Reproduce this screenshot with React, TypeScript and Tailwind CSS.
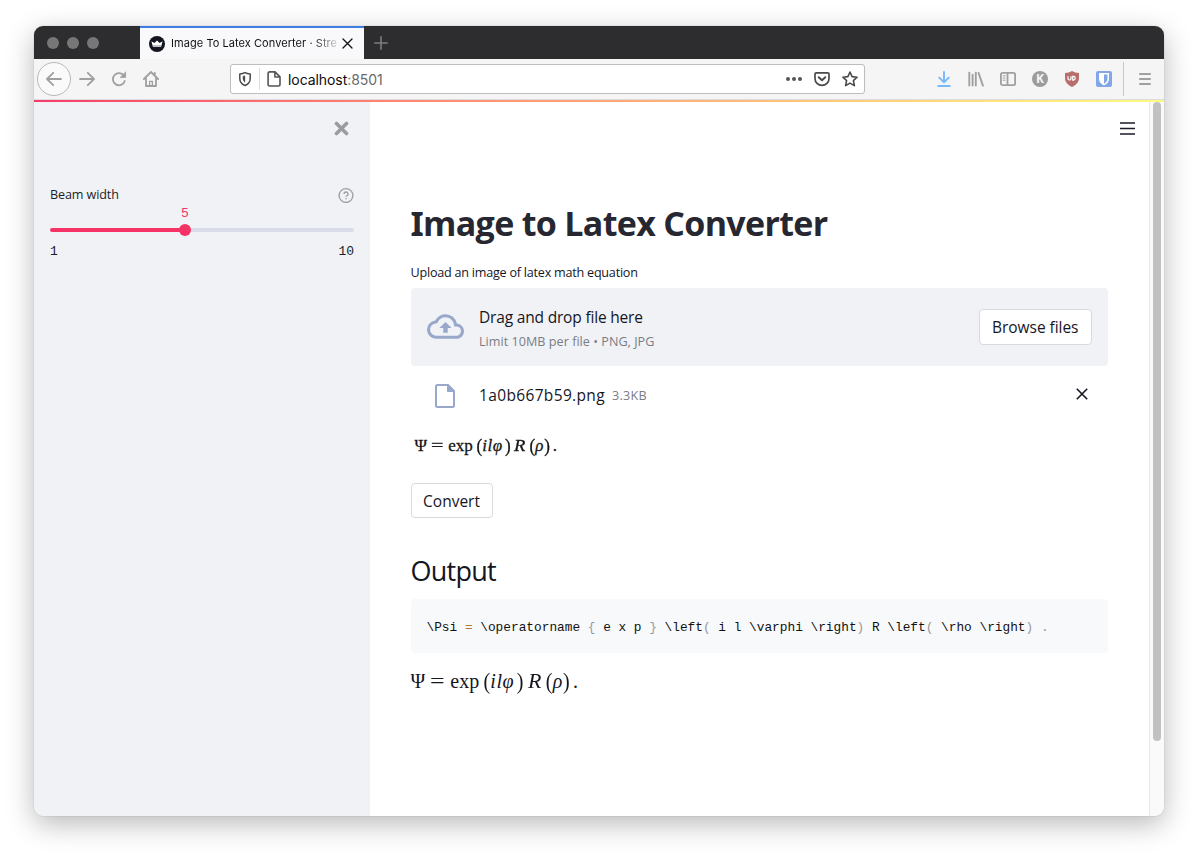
import type { ReactNode } from "react";

function TabStrip() {
  return (
    <div className="flex h-[33px] shrink-0 bg-[#2d2d2f]">
      <div className="flex w-[106px] items-center gap-2 pl-[13px]">
        <span className="size-3 rounded-full bg-[#777]" />
        <span className="size-3 rounded-full bg-[#777]" />
        <span className="size-3 rounded-full bg-[#777]" />
      </div>
      <div className="flex w-[224px] items-center border-t-2 border-[#3b7de0] bg-[#f9f9fb] pl-[9px]">
        <svg className="size-4 shrink-0" viewBox="0 0 16 16">
          <circle cx="8" cy="8" r="8" fill="#12141f" />
          <path d="M2.4 5.2 5.3 7 8 4.400l2.700 2.600 2.900-1.800-1.500 5.600H3.900z" fill="#fff" />
          <path d="M3.800 9.600h8.400" stroke="#9a9ba2" strokeWidth="0.700" />
        </svg>
        <div className="ml-[6px] w-[166px] whitespace-nowrap bg-linear-to-r from-[#111] from-85% to-[#11111130] bg-clip-text font-['Inter',sans-serif] text-[11px] tracking-[0.06px] text-transparent">
          Image To Latex Converter · Stre
        </div>
        <svg className="ml-[5px] size-[11px] shrink-0" viewBox="0 0 11 11" fill="none" stroke="#111" strokeWidth="1.300" strokeLinecap="round">
          <path d="M1 1l9 9M10 1l-9 9" />
        </svg>
      </div>
      <div className="flex items-center pl-[10px]">
        <svg className="size-[14px]" viewBox="0 0 14 14" fill="none" stroke="#7c7c7e" strokeWidth="1.600" strokeLinecap="round">
          <path d="M7 .8v12.400M.8 7h12.400" />
        </svg>
      </div>
    </div>
  );
}

function Icon({ children, className = "", color = "#a0a0a0", width = 2 }: { children: ReactNode; className?: string; color?: string; width?: number }) {
  return (
    <svg className={`size-4 shrink-0 ${className}`} viewBox="0 0 16 16" fill="none" stroke={color} strokeWidth={width} strokeLinecap="round" strokeLinejoin="round">
      {children}
    </svg>
  );
}

function Toolbar() {
  return (
    <div className="flex h-[41px] shrink-0 items-center border-b border-[#dcdce0] bg-[#f5f5f5]">
      <div className="ml-[3px] flex size-[34px] items-center justify-center rounded-full border border-[#b8b8b8] bg-[#fafafa]">
        <Icon width={1.8}><path d="M15 8H1.2M7.2 1.8 1 8l6.2 6.2" /></Icon>
      </div>
      <Icon className="ml-2" width={1.8}><path d="M1 8h13.8M8.8 1.8 15 8l-6.2 6.2" /></Icon>
      <Icon className="ml-4" width={1.8}>
        <path d="M13.2 5A6.1 6.1 0 1 0 13.8 10" />
        <path d="M14.6 1.3v5.1H9.5z" fill="#a0a0a0" strokeWidth="0.8" />
      </Icon>
      <Icon className="ml-4" width={1.8}>
        <path d="M.9 8 8 1l7.1 7M3 7.5V15h10V7.5M11.8 2v2" />
        <path d="M6.6 15v-4.6h2.8V15" strokeWidth="1.3" />
      </Icon>
      <div className="ml-[71px] flex h-[30px] w-[635px] shrink-0 items-center rounded-[3px] border border-[#bdbdbd] bg-white">
        <Icon className="ml-[6px]" color="#4a4a4a" width={1.5}>
          <path d="M2.8 3Q6 2.700 8 1.600 10 2.700 13.200 3v4.400c0 3.300-2.200 5.800-5.200 7.100-3-1.300-5.200-3.800-5.200-7.100z" />
          <path d="M8 4.800v6.600C6.600 10.300 5.900 9 5.900 7.300V5.500z" fill="#4a4a4a" strokeWidth="0.300" />
        </Icon>
        <span className="ml-[6px] h-[22px] w-px bg-[#dcdcdc]" />
        <Icon className="ml-[6px]" color="#555" width={1.6}>
          <path d="M3.8.9H9l5 5v7.4a1.7 1.7 0 0 1-1.7 1.7H3.8a1.7 1.7 0 0 1-1.7-1.7V2.6A1.7 1.7 0 0 1 3.8.9zM8.9 1v5H14" />
        </Icon>
        <span className="ml-[6px] w-[480px] font-['Inter',sans-serif] text-[14px] tracking-[-0.07px] text-[#0c0c0d]">
          localhost<span className="text-[#6a6a6c]">:8501</span>
        </span>
        <Icon className="ml-[18px]" color="#555" width={0}>
          <g fill="#555"><circle cx="2" cy="8" r="2" /><circle cx="8" cy="8" r="2" /><circle cx="14" cy="8" r="2" /></g>
        </Icon>
        <Icon className="ml-3" color="#4a4a4a" width={1.7}>
          <path d="M2.3 1.8h11.4A1.3 1.3 0 0 1 15 3.1v4.3a7 7 0 0 1-14 0V3.1a1.3 1.3 0 0 1 1.3-1.3z" />
          <path d="m4.7 6.2 3.3 3.1 3.3-3.1" strokeWidth="1.9" />
        </Icon>
        <Icon className="ml-3" color="#4a4a4a" width={1.6}>
          <path d="m8 1 2.1 4.6 5 .6-3.7 3.4 1 5L8 12.1l-4.4 2.5 1-5L.9 6.2l5-.6z" />
        </Icon>
      </div>
      <Icon className="ml-[71px]" color="#78baf9" width={1.9}><path d="M8 1v10M3.2 6.6 8 11.3l4.8-4.7M2.2 15h11.6" /></Icon>
      <Icon className="ml-4" width={1.9}><path d="M1.3 1.600v13M4.600 3.600v11M7.800 1.600v13M10.600 2l4.300 12.600" /></Icon>
      <Icon className="ml-4" width={1.8}>
        <rect x=".9" y="1.800" width="14.200" height="12.400" rx="1.800" />
        <path d="M7.500 2v12" />
        <path d="M3.200 4.800h1.900M3.200 7h1.900M3.200 9.200h1.900" strokeWidth="1" />
      </Icon>
      <div className="ml-4 flex size-4 items-center justify-center rounded-full bg-[#9c9c9c] font-['Open_Sans',sans-serif] text-[12px] font-bold text-[#f5f5f5]">K</div>
      <svg className="ml-4 size-4" viewBox="0 0 16 16">
        <path d="M8 0Q11 2 15 2v5c0 4-2.600 7-7 9-4.400-2-7-5-7-9V2Q5 2 8 0z" fill="#b96e6e" />
        <path d="M4 5.300v2.200a1.500 1.500 0 0 0 3 0V5.300M8.700 5.400h1a1.900 1.900 0 0 1 0 3.700h-1z" fill="none" stroke="#fff" strokeWidth="1.200" />
      </svg>
      <svg className="ml-4 size-4" viewBox="0 0 16 16">
        <rect width="16" height="16" rx="2" fill="#82a6e8" />
        <path d="M3 2h10v6c0 3-2 4.800-5 6.500C5 12.800 3 11 3 8z" fill="#fff" />
        <path d="M8 3.500h3.500V8c0 2-1.300 3.300-3.500 4.700z" fill="#82a6e8" />
      </svg>
      <span className="ml-[11px] h-[34px] w-px bg-[#c8c8c8]" />
      <svg className="ml-[15px] h-3 w-3" viewBox="0 0 12 12" stroke="#a0a0a0" strokeWidth="1.800" strokeLinecap="round"><path d="M.9 1h10.200M.9 6h10.200M.9 11h10.200" /></svg>
    </div>
  );
}

function Sidebar() {
  return (
    <aside className="flex w-[336px] shrink-0 flex-col bg-[#f0f2f6] pl-4 pr-4 pt-[19px]">
      <svg className="mr-[5px] size-[15px] self-end" viewBox="0 0 15 15" stroke="#9b9ca1" strokeWidth="3.600" strokeLinecap="round"><path d="M2.500 2.500l10 10M12.500 2.500l-10 10" /></svg>
      <div className="mt-[49px] flex h-5 items-center justify-between font-['Open_Sans','Noto_Sans',sans-serif] text-[12.600px] tracking-[-0.12px] text-[#1c1d26]">
        <span>Beam width</span>
        <svg className="size-4" viewBox="0 0 16 16" fill="none" stroke="#a0a1a6" strokeWidth="1.400">
          <circle cx="8" cy="8.500" r="6.900" />
          <path d="M6 7a2 2 0 1 1 2.800 1.800c-.6.3-.8.5-.8 1" />
          <path d="M8 11v1.300" />
        </svg>
      </div>
      <div className="flex h-[18px] w-[270px] items-center justify-center font-['Liberation_Mono',monospace] text-[13px] text-[#f63366]">5</div>
      <div className="mt-[1px] flex h-3 items-center">
        <span className="h-1 w-[130px] rounded-l-full bg-[#f63366]" />
        <span className="-ml-px size-3 rounded-full bg-[#f63366]" />
        <span className="h-1 flex-1 rounded-r-full bg-[#d9dce8]" />
      </div>
      <div className="mt-[6px] flex h-5 items-center justify-between font-['Liberation_Mono',monospace] text-[13px] text-[#1c1d26]">
        <span>1</span><span>10</span>
      </div>
    </aside>
  );
}

const code: [string, string][] = [
  ["\\Psi ", "text-[#111]"], ["= ", "text-[#b07a2a]"], ["\\operatorname ", "text-[#111]"], ["{ ", "text-[#999]"],
  ["e x p ", "text-[#111]"], ["} ", "text-[#999]"], ["\\left", "text-[#111]"], ["( ", "text-[#999]"],
  ["i l \\varphi \\right", "text-[#111]"], [") ", "text-[#999]"], ["R \\left", "text-[#111]"], ["( ", "text-[#999]"],
  ["\\rho \\right", "text-[#111]"], [") ", "text-[#999]"], [".", "text-[#999]"],
];

function Formula({ className }: { className: string }) {
  return (
    <div className={`flex items-center whitespace-nowrap font-['Liberation_Serif',serif] ${className}`}>
      <span className="w-[0.970em]">Ψ</span>
      <span className="w-[1.020em] origin-left scale-x-130">=</span>
      <span className="w-[1.660em]">exp</span>
      <span className="w-[0.340em] scale-y-115">(</span>
      <span className="w-[1.330em] italic tracking-[0.03em]">ilφ</span>
      <span className="w-[0.550em] scale-y-115">)</span>
      <span className="w-[0.900em] origin-left scale-x-110 italic">R</span>
      <span className="w-[0.340em] scale-y-115">(</span>
      <span className="w-[0.520em] italic">ρ</span>
      <span className="w-[0.500em] scale-y-115">)</span>
      <span>.</span>
    </div>
  );
}

function Main() {
  return (
    <main className="flex min-w-0 flex-1 flex-col bg-white font-['Open_Sans','Noto_Sans',sans-serif] text-[#15161f]">
      <div className="flex h-[54px] shrink-0 items-center justify-end pr-[14px]">
        <svg className="mb-px h-[13px] w-[15px]" viewBox="0 0 15 13" stroke="#1c1d28" strokeWidth="1.400"><path d="M0 1h15M0 6.500h15M0 12h15" /></svg>
      </div>
      <div className="ml-[40.500px] flex w-[697.500px] flex-col">
        <h1 className="mt-[42px] h-[50px] whitespace-nowrap text-[34px] leading-[51px] font-bold tracking-[-0.680px] text-[#262730]">
          <span className="font-['Noto_Sans',sans-serif]">I</span>mage to Latex Converter
        </h1>
        <p className="mt-[14px] h-5 text-[12.600px] leading-[21px] tracking-[-0.230px]">Upload an image of latex math equation</p>
        <div className="mt-[6px] flex h-[78px] items-center rounded-[4px] bg-[#f0f2f6] px-4">
          <svg className="mb-px size-[37px]" viewBox="0 0 24 24" fill="#98a8cb">
            <path d="M19.350 10.040A7.490 7.490 0 0 0 12 4C9.110 4 6.600 5.640 5.350 8.040A5.994 5.994 0 0 0 0 14c0 3.310 2.690 6 6 6h13c2.760 0 5-2.240 5-5 0-2.640-2.050-4.780-4.650-4.960zM19 18H6c-2.210 0-4-1.790-4-4 0-2.050 1.530-3.760 3.560-3.970l1.070-.11.5-.95A5.469 5.469 0 0 1 12 6c2.620 0 4.880 1.860 5.390 4.430l.3 1.500 1.530.11A2.980 2.980 0 0 1 22 15c0 1.650-1.350 3-3 3zM8 13h2.550v3h2.900v-3H16l-4-4z" />
          </svg>
          <div className="ml-[15.500px] flex flex-1 flex-col pt-[5px]">
            <span className="text-[15.500px] leading-6 tracking-[-0.180px]">Drag and drop file here</span>
            <span className="mt-px text-[12.600px] leading-6 tracking-[0.030px] text-[#7b7d85]">Limit 10MB per file • PNG, JPG</span>
          </div>
          <button className="h-[36px] w-[113.500px] rounded-[4px] border border-[#d9dadf] bg-white pt-[2px] text-[15.500px] tracking-[-0.050px]">Browse files</button>
        </div>
        <div className="flex h-[60px] items-center px-4">
          <svg className="ml-[8px] h-[24px] w-[20px]" viewBox="0 0 20 24" fill="none" stroke="#98a8cb" strokeWidth="2" strokeLinejoin="round"><path d="M2.500 1H13l6 6v14.500a1.500 1.500 0 0 1-1.500 1.500h-15A1.500 1.500 0 0 1 1 21.500v-19A1.500 1.500 0 0 1 2.500 1z" /><path d="M12.500 1v6.500H19z" fill="#98a8cb" strokeWidth="1" /></svg>
          <span className="-mt-px ml-[24.500px] text-[15.500px] tracking-[0.350px]">1a0b667b59.png</span>
          <span className="ml-[7px] text-[12.600px] tracking-[0.300px] text-[#7b7d85]">3.3KB</span>
          <svg className="ml-auto mr-[4px] mt-[-4px] size-[12px]" viewBox="0 0 12 12" stroke="#15161f" strokeWidth="1.600"><path d="M.8.8l10.400 10.400M11.200.8L.8 11.200" /></svg>
        </div>
        <Formula className="ml-[4px] mt-[8px] h-6 text-[17px] text-[#111] [-webkit-text-stroke:0.300px_#222]" />
        <button className="mt-[24.500px] h-[35.500px] w-[82px] rounded-[4px] border border-[#d9dadf] bg-white pt-[2px] text-[15.500px]">Convert</button>
        <h2 className="mt-[32px] h-[40px] text-[27px] leading-[41px] tracking-[-0.750px]">Output</h2>
        <pre className="mt-[9px] flex h-[54px] items-center rounded-[4px] bg-[#f8f9fb] pl-4 pt-[3px] font-['Liberation_Mono',monospace] text-[12.800px]"><code className="font-['Liberation_Mono',monospace]">{code.map(([t, c], i) => <span key={i} className={c}>{t}</span>)}</code></pre>
        <Formula className="mt-[16px] h-6 text-[20px]" />
      </div>
    </main>
  );
}

export default function App() {
  return (
    <div className="h-[858px] w-[1198px] overflow-hidden bg-white pl-[34px] pt-[26px]">
      <div className="flex h-[790px] w-[1130px] flex-col overflow-hidden rounded-[9px] shadow-[0_8px_28px_rgba(0,0,0,0.28),0_0_1px_rgba(0,0,0,0.4)]">
        <TabStrip />
        <Toolbar />
        <div className="h-[2px] shrink-0 bg-linear-to-r from-[#f63b68] to-[#fbfb80]" />
        <div className="flex min-h-0 flex-1">
          <Sidebar />
          <Main />
          <div className="w-[15px] shrink-0 border-l border-[#e8e8e8] bg-[#fafafa] pl-[3px]">
            <div className="h-[639px] w-2 rounded-full bg-[#c1c1c1]" />
          </div>
        </div>
      </div>
    </div>
  );
}
